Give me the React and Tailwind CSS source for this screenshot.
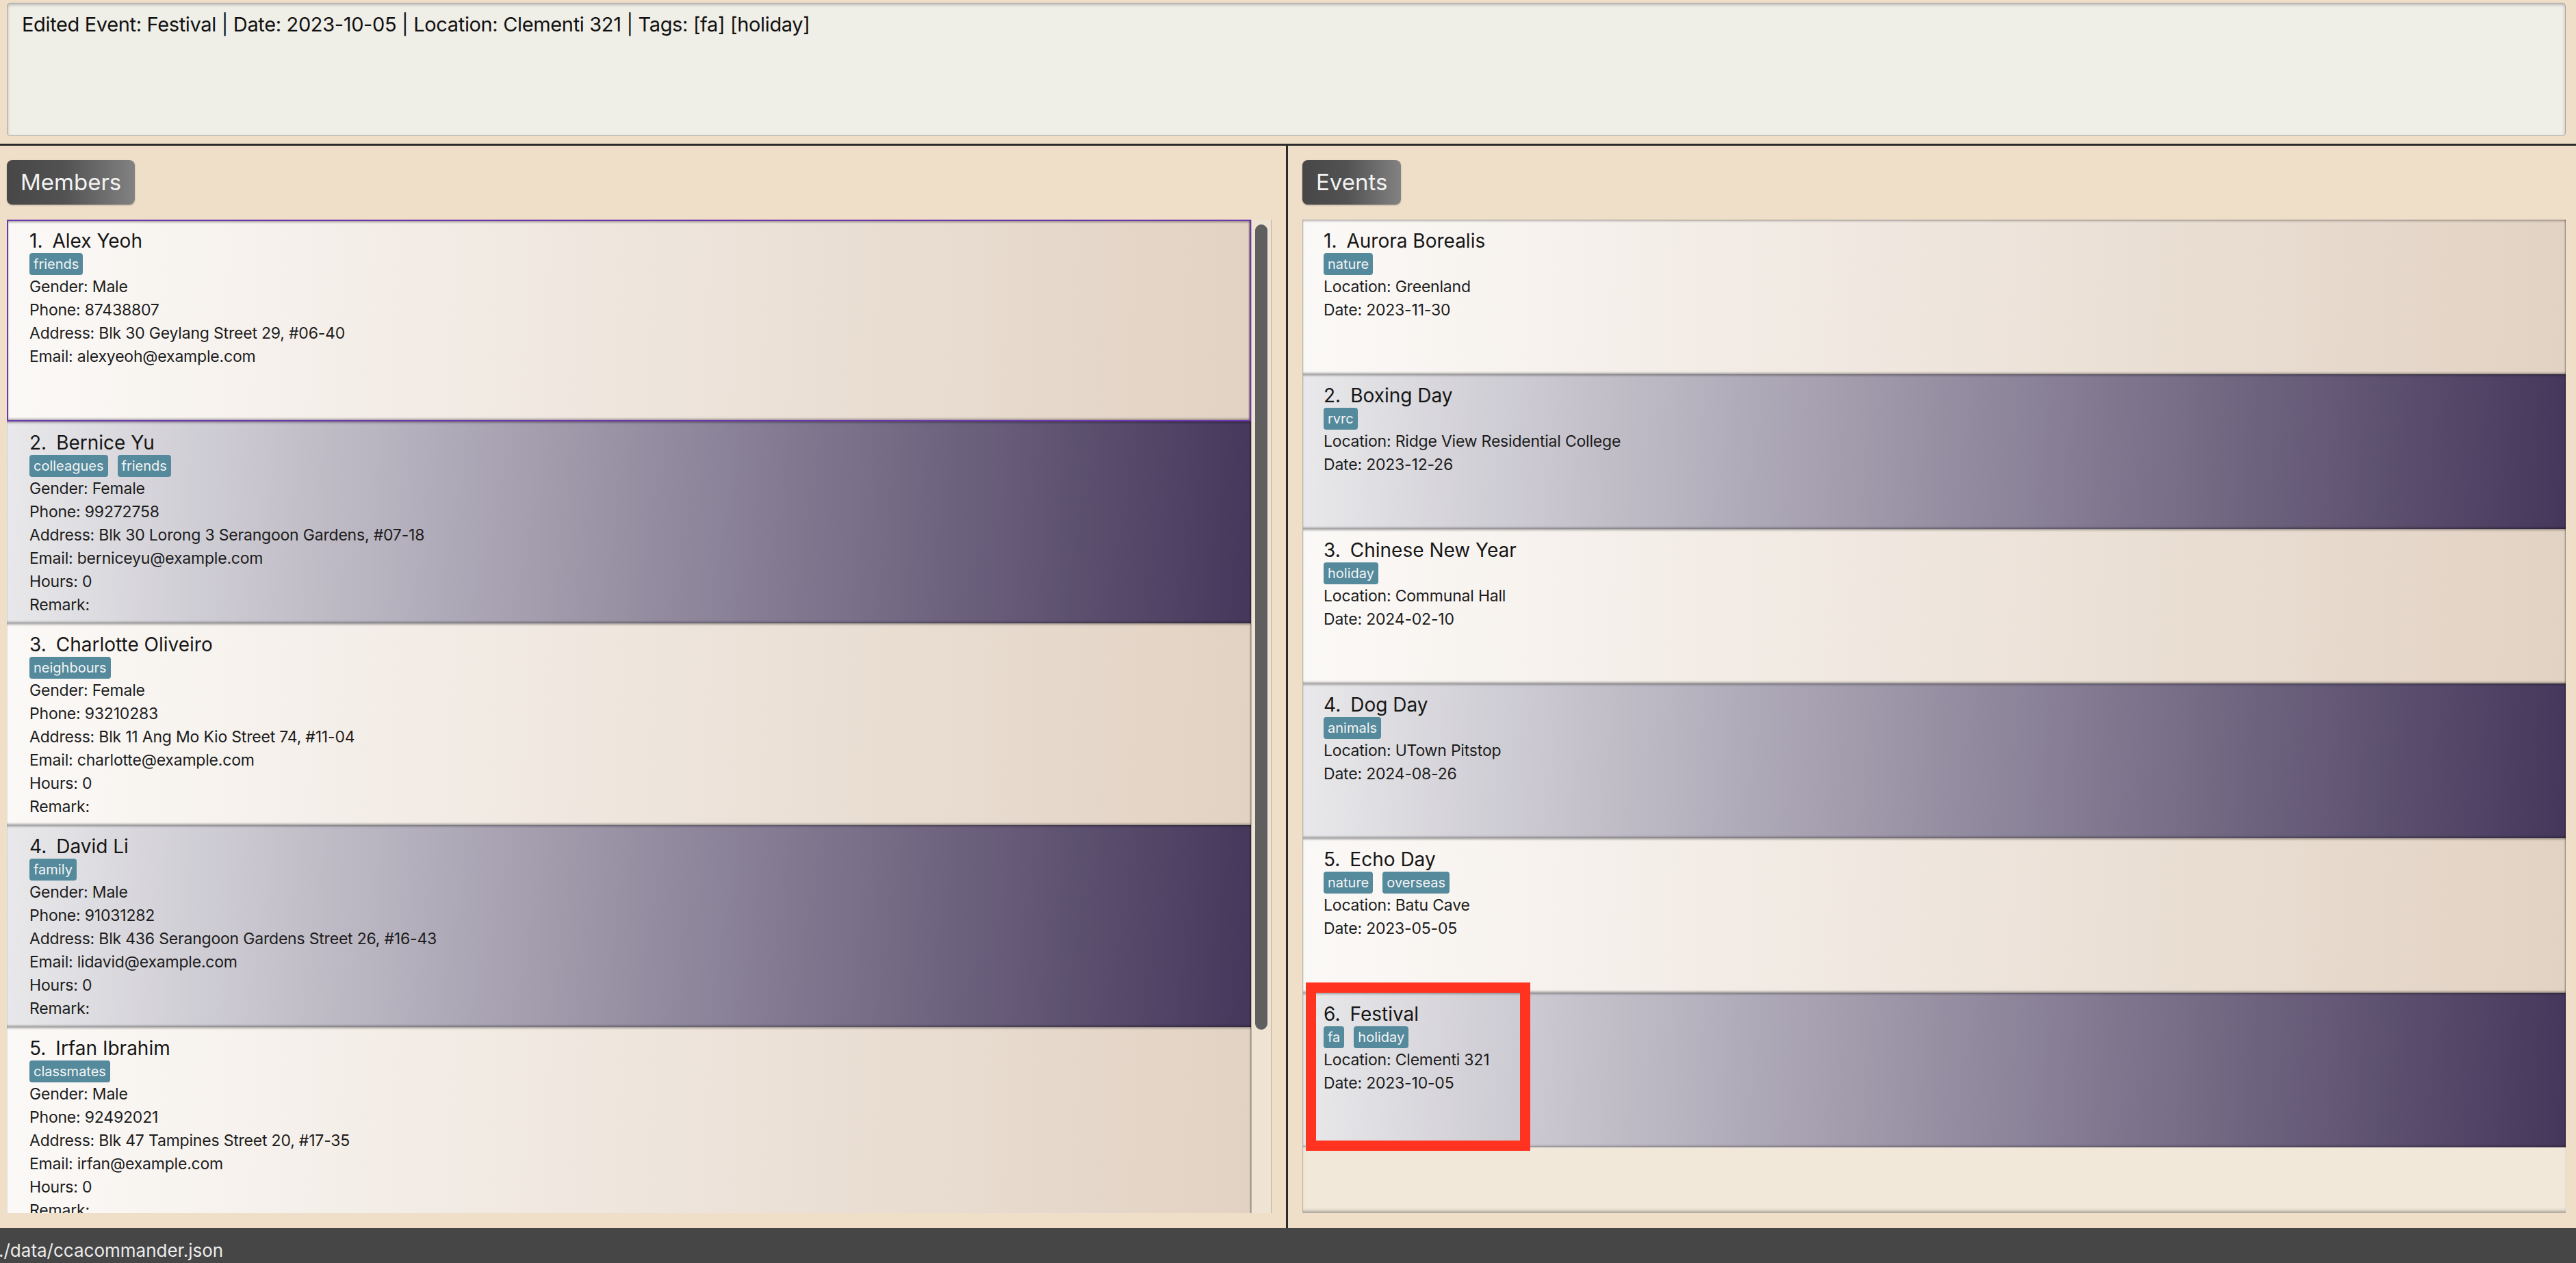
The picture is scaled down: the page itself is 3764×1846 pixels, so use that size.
import React from 'react'

const members = [
    {
        name: 'Alex Yeoh', tags: ['friends'], gender: 'Male', phone: '87438807',
        address: 'Blk 30 Geylang Street 29, #06-40', email: 'alexyeoh@example.com', extra: false,
    },
    {
        name: 'Bernice Yu', tags: ['colleagues', 'friends'], gender: 'Female', phone: '99272758',
        address: 'Blk 30 Lorong 3 Serangoon Gardens, #07-18', email: 'berniceyu@example.com', extra: true,
    },
    {
        name: 'Charlotte Oliveiro', tags: ['neighbours'], gender: 'Female', phone: '93210283',
        address: 'Blk 11 Ang Mo Kio Street 74, #11-04', email: 'charlotte@example.com', extra: true,
    },
    {
        name: 'David Li', tags: ['family'], gender: 'Male', phone: '91031282',
        address: 'Blk 436 Serangoon Gardens Street 26, #16-43', email: 'lidavid@example.com', extra: true,
    },
    {
        name: 'Irfan Ibrahim', tags: ['classmates'], gender: 'Male', phone: '92492021',
        address: 'Blk 47 Tampines Street 20, #17-35', email: 'irfan@example.com', extra: true,
    },
]

const events = [
    { name: 'Aurora Borealis', tags: ['nature'], location: 'Greenland', date: '2023-11-30' },
    { name: 'Boxing Day', tags: ['rvrc'], location: 'Ridge View Residential College', date: '2023-12-26' },
    { name: 'Chinese New Year', tags: ['holiday'], location: 'Communal Hall', date: '2024-02-10' },
    { name: 'Dog Day', tags: ['animals'], location: 'UTown Pitstop', date: '2024-08-26' },
    { name: 'Echo Day', tags: ['nature', 'overseas'], location: 'Batu Cave', date: '2023-05-05' },
    { name: 'Festival', tags: ['fa', 'holiday'], location: 'Clementi 321', date: '2023-10-05' },
]

const lightCard = 'bg-[linear-gradient(92deg,#fbf9f7,#e2d2c3)]'
const darkCard = 'bg-[linear-gradient(92deg,#e9e9eb,#45375b)]'
const cardShadow = 'shadow-[inset_0_3px_3px_-1px_rgba(0,0,0,0.3),inset_0_-3px_3px_-1px_rgba(0,0,0,0.3),inset_-2px_0_2px_-1px_rgba(0,0,0,0.35)]'

function Tags({ tags }) {
    return (
        <div className="flex gap-[14px] h-[32px]">
            {tags.map((t) => (
                <span key={t} className="px-[6px] rounded-[4px] bg-[#548a9c] text-[#f4f4f4] text-[20px] leading-[32px]">
                    {t}
                </span>
            ))}
        </div>
    )
}

function Title({ index, name }) {
    return (
        <div className="text-[28px] leading-[36px] text-[#161616] flex">
            <span>{index}.</span>
            <span className="ml-[14px]">{name}</span>
        </div>
    )
}

function MemberCard({ member, index }) {
    const selected = index === 1
    return (
        <div
            className={`h-[295px] shrink-0 ${index % 2 ? lightCard : darkCard} ${cardShadow} ${selected ? 'border-2 border-[#6d38ad] pl-[31px] pt-[11px]' : 'pl-[33px] pt-[13px]'}`}
        >
            <Title index={index} name={member.name} />
            <Tags tags={member.tags} />
            <div className="text-[23px] leading-[34px] text-[#1c1c1c] tracking-[-0.2px]">
                <p>Gender: {member.gender}</p>
                <p>Phone: {member.phone}</p>
                <p>Address: {member.address}</p>
                <p>Email: {member.email}</p>
                {member.extra && (
                    <>
                        <p>Hours: 0</p>
                        <p>Remark:</p>
                    </>
                )}
            </div>
        </div>
    )
}

function EventCard({ event, index }) {
    return (
        <div className={`h-[226px] shrink-0 pl-[30px] pt-[13px] ${index % 2 ? lightCard : darkCard} ${cardShadow}`}>
            <Title index={index} name={event.name} />
            <Tags tags={event.tags} />
            <div className="text-[23px] leading-[34px] text-[#1c1c1c] tracking-[-0.2px]">
                <p>Location: {event.location}</p>
                <p>Date: {event.date}</p>
            </div>
        </div>
    )
}

function PanelLabel({ children }) {
    return (
        <div className="h-[65px] self-start px-[20px] rounded-[8px] bg-[linear-gradient(to_right,#474747,#525252_45%,#828282)] text-[#f2f2f2] text-[33px] leading-[65px] shadow-[0_1px_2px_rgba(0,0,0,0.3)]">
            {children}
        </div>
    )
}

export default function App() {
    return (
        <div
            className="relative w-[3764px] h-[1846px] overflow-hidden bg-[#efdfc8] flex flex-col"
            style={{ fontFamily: 'Inter, "Noto Sans", sans-serif' }}
        >
            {/* Result display */}
            <div className="h-[210px] shrink-0 pl-[10px] pr-[15px] pt-[4px] pb-[11px]">
                <div className="h-full rounded-[5px] bg-[#efeee7] border border-[#a9a69f] shadow-[inset_0_2px_4px_rgba(0,0,0,0.25)] pl-[21px] pt-[13px]">
                    <p className="text-[29px] leading-[36px] tracking-[-0.35px] text-[#111]">
                        Edited Event: Festival | Date: 2023-10-05 | Location: Clementi 321 | Tags: [fa] [holiday]
                    </p>
                </div>
            </div>
            <div className="h-[3px] shrink-0 bg-[#2b2b2b]" />

            {/* Lists */}
            <div className="flex-1 flex min-h-0">
                <div className="w-[1879px] shrink-0 flex flex-col pl-[10px] pr-[21px] pt-[21px] pb-[22px] gap-[22px]">
                    <PanelLabel>Members</PanelLabel>
                    <div className="flex-1 min-h-0 flex">
                        <div className="w-[1818px] flex flex-col overflow-hidden shadow-[inset_0_-4px_4px_-2px_rgba(0,0,0,0.3)]">
                            {members.map((m, i) => (
                                <MemberCard key={m.name} member={m} index={i + 1} />
                            ))}
                        </div>
                        <div className="w-[30px] bg-[#efe4d3] border-x border-[#b9afa0] pt-[7px] px-[5px]">
                            <div className="h-[1177px] rounded-full bg-[#5f5f5f]" />
                        </div>
                    </div>
                </div>
                <div className="w-[3px] shrink-0 bg-[#2b2b2b]" />
                <div className="flex-1 flex flex-col pl-[21px] pr-[15px] pt-[21px] pb-[22px] gap-[22px]">
                    <PanelLabel>Events</PanelLabel>
                    <div className="flex-1 min-h-0 flex flex-col bg-[#f1e8d9] border-l border-[#bdb3a4] shadow-[inset_0_-5px_4px_-2px_rgba(0,0,0,0.3)]">
                        {events.map((e, i) => (
                            <EventCard key={e.name} event={e} index={i + 1} />
                        ))}
                    </div>
                </div>
            </div>

            {/* Status bar */}
            <div className="h-[51px] shrink-0 bg-[#464646] pt-[14px]">
                <p className="text-[26px] leading-[38px] text-[#ececec] -ml-[2px]">./data/ccacommander.json</p>
            </div>

            {/* Highlight annotation */}
            <div className="absolute left-[1908px] top-[1436px] w-[328px] h-[246px] border-[15px] border-[#ff3320]" />
        </div>
    )
}
